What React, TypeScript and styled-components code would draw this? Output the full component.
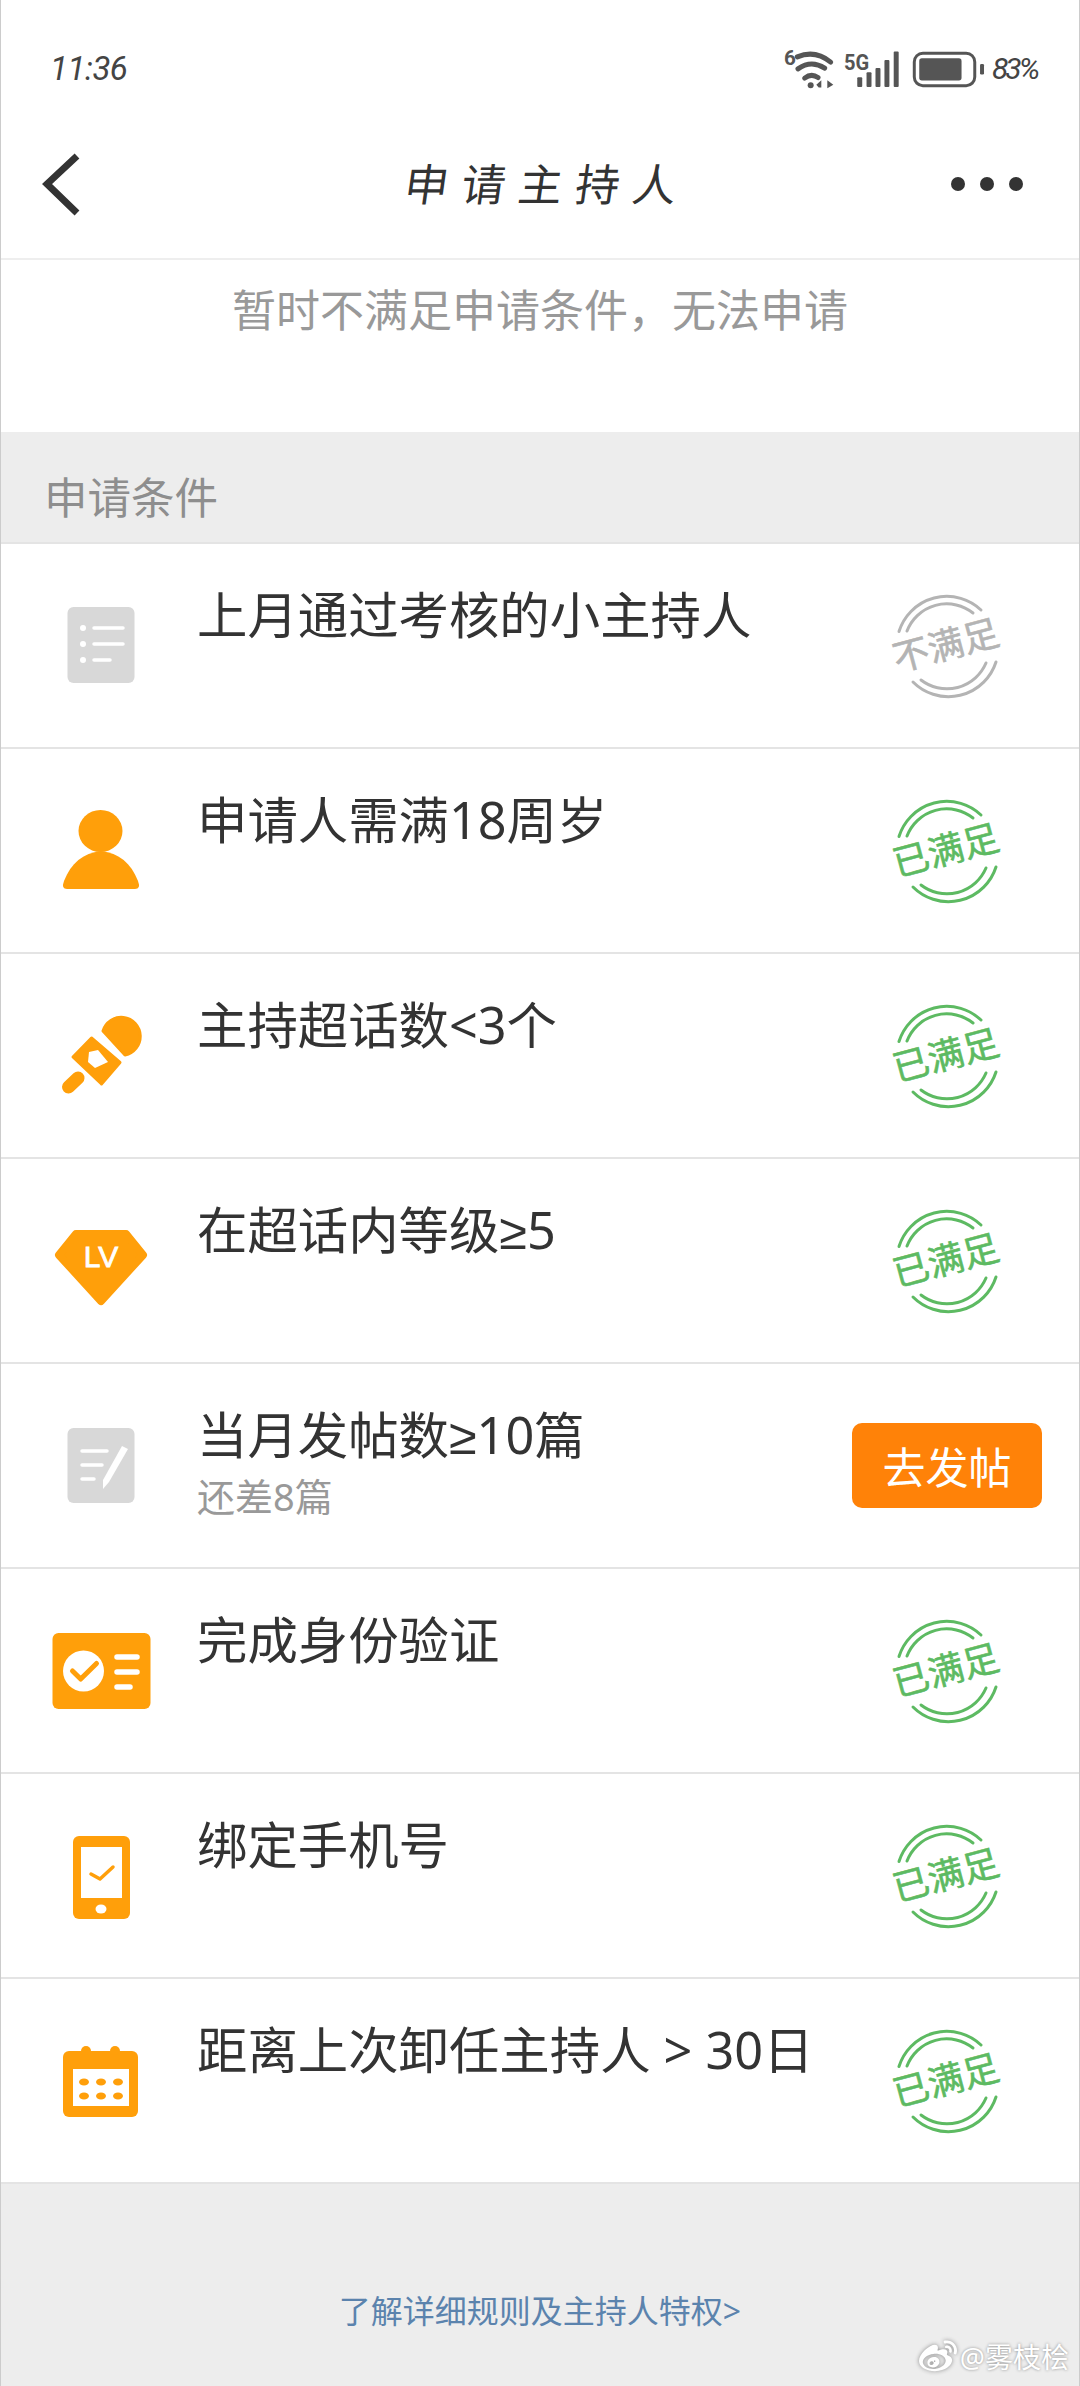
import React from 'react'
import styled, { createGlobalStyle } from 'styled-components'
import { FaWeibo } from 'react-icons/fa'

const ORANGE = '#ff9f0a'
const GREY = '#d8d8d8'

const ListIcon = () => (
  <IconSvg viewBox="0 0 120 100">
    <rect x="26.5" y="11" width="67" height="76" rx="6" fill={GREY} />
    <g fill="#fff">
      <circle cx="42" cy="32" r="3" />
      <circle cx="42" cy="48" r="3" />
      <circle cx="42" cy="64" r="3" />
    </g>
    <g stroke="#fff" strokeWidth="3.5" strokeLinecap="round">
      <path d="M53 32H82" />
      <path d="M53 48H82" />
      <path d="M53 64H69" />
    </g>
  </IconSvg>
)

const PersonIcon = () => (
  <IconSvg viewBox="0 0 120 100">
    <g fill={ORANGE}>
      <ellipse cx="59.5" cy="30" rx="22" ry="21" />
      <path d="M26 88Q20 88 23 80C30 62 42 52 60 50C78 52 90 62 97 80Q100 88 94 88Z" />
    </g>
  </IconSvg>
)

const MicIcon = () => (
  <IconSvg viewBox="0 0 120 100">
    <g fill={ORANGE} stroke={ORANGE} strokeWidth="3" strokeLinejoin="round">
      <path d="M62 25A19 19 0 1 1 84 49Z" />
      <path d="M50.5 32L79 56.5L60.5 78L32 51Z" />
    </g>
    <path d="M48 46L57 44L67 56L54 62L47 56Z" fill="#fff" />
    <path d="M27.5 81L37 72" stroke={ORANGE} strokeWidth="13" strokeLinecap="round" />
  </IconSvg>
)

const LevelIcon = () => (
  <IconSvg viewBox="0 0 120 100">
    <path
      d="M35 23H85L102 44L60 90L18 44Z"
      fill={ORANGE}
      stroke={ORANGE}
      strokeWidth="8"
      strokeLinejoin="round"
    />
    <LevelText x="60" y="56" textAnchor="middle">
      LV
    </LevelText>
  </IconSvg>
)

const EditIcon = () => (
  <IconSvg viewBox="0 0 120 100">
    <rect x="26.5" y="12" width="67" height="75" rx="6" fill={GREY} />
    <g stroke="#fff" strokeWidth="3.5" strokeLinecap="round">
      <path d="M41 35H66" />
      <path d="M41 49H61" />
      <path d="M41 63H53" />
    </g>
    <path d="M81 30L87 33L68 66L62 73L62 64Z" fill="#fff" />
  </IconSvg>
)

const CardIcon = () => (
  <IconSvg viewBox="0 0 120 100">
    <rect x="11.5" y="12" width="98" height="76" rx="6" fill={ORANGE} />
    <circle cx="42.5" cy="50" r="20.5" fill="#fff" />
    <path d="M31.5 50L39.7 58L55.5 42.5" fill="none" stroke={ORANGE} strokeWidth="5" strokeLinecap="round" strokeLinejoin="round" />
    <g stroke="#fff" strokeWidth="5.5" strokeLinecap="round">
      <path d="M76 36H96" />
      <path d="M76 51H96" />
      <path d="M76 66H89" />
    </g>
  </IconSvg>
)

const PhoneIcon = () => (
  <IconSvg viewBox="0 0 120 100">
    <rect x="32" y="10" width="57" height="83" rx="6" fill={ORANGE} />
    <rect x="40" y="21" width="41" height="51" fill="#fff" />
    <path d="M50 48L59 53L72 41" fill="none" stroke={ORANGE} strokeWidth="3.5" strokeLinecap="round" strokeLinejoin="round" />
    <ellipse cx="60" cy="83" rx="5.5" ry="4.5" fill="#fff" />
  </IconSvg>
)

const CalendarIcon = () => (
  <IconSvg viewBox="0 0 120 100">
    <g fill={ORANGE}>
      <circle cx="45" cy="20" r="5" />
      <circle cx="74" cy="20" r="5" />
      <rect x="22" y="20" width="75" height="66" rx="6" />
    </g>
    <rect x="32" y="38" width="56" height="37" fill="#fff" />
    <g fill={ORANGE}>
      {[43, 60, 77].map((x) =>
        [51, 65].map((y) => <ellipse key={`${x}-${y}`} cx={x} cy={y} rx="5" ry="3.5" />),
      )}
    </g>
  </IconSvg>
)

const WifiIcon = () => (
  <StatusSvg viewBox="65 35 165 155" width="55" height="52">
    <text x="68" y="100" fontFamily="Roboto, sans-serif" fontSize="62" fontWeight="700" fill="#555">
      6
    </text>
    <g fill="none" stroke="#555" strokeWidth="15" strokeLinecap="round">
      <path d="M108 76Q162 54 208 92" />
      <path d="M110 112Q150 84 190 110" />
      <path d="M130 140Q150 124 170 138" />
    </g>
    <circle cx="148" cy="161" r="9" fill="#555" />
    <path d="M165 160L180 146V168H172Z" fill="#555" />
    <path d="M198 146L216 160L198 170Z" fill="#555" />
  </StatusSvg>
)

const SignalIcon = () => (
  <StatusSvg viewBox="250 55 175 120" width="58" height="40">
    <text x="250" y="118" fontFamily="Roboto, sans-serif" fontSize="68" fontWeight="700" fill="#555" textLength="76" lengthAdjust="spacingAndGlyphs">
      5G
    </text>
    <g fill="#555">
      <rect x="290" y="140" width="15" height="29" rx="3" />
      <rect x="318" y="125" width="15" height="44" rx="3" />
      <rect x="345" y="112" width="15" height="57" rx="3" />
      <rect x="372" y="88" width="15" height="81" rx="3" />
      <rect x="400" y="62" width="15" height="107" rx="3" />
    </g>
  </StatusSvg>
)

const BatteryIcon = () => (
  <StatusSvg viewBox="449 58 234 115" width="78" height="38">
    <rect x="467" y="68" width="183" height="98" rx="26" fill="none" stroke="#555" strokeWidth="9" />
    <rect x="482" y="83" width="128" height="67" rx="8" fill="#555" />
    <rect x="666" y="100" width="12" height="32" rx="4" fill="#555" />
  </StatusSvg>
)

const Stamp: React.FC<{ label: string; $color: string }> = ({ label, $color }) => (
  <StampSvg viewBox="0 0 110 110">
    <g fill="none" stroke={$color} strokeWidth="3" strokeLinecap="round">
      <path d="M7 40.5A50 50 0 0 1 89 19" />
      <path d="M15 40A42.5 42.5 0 0 1 81 22" />
      <path d="M21 91A50 50 0 0 0 104 71" />
      <path d="M29 89A42.5 42.5 0 0 0 94 72" />
    </g>
    <StampText x="54" y="67" textAnchor="middle" transform="rotate(-15 55 55)" fill={$color} stroke={$color}>
      {label}
    </StampText>
  </StampSvg>
)

type Condition = {
  title: string
  Icon: React.FC
  hint?: string
  status: 'met' | 'unmet' | 'action'
}

const conditions: Condition[] = [
  { title: '上月通过考核的小主持人', Icon: ListIcon, status: 'unmet' },
  { title: '申请人需满18周岁', Icon: PersonIcon, status: 'met' },
  { title: '主持超话数<3个', Icon: MicIcon, status: 'met' },
  { title: '在超话内等级≥5', Icon: LevelIcon, status: 'met' },
  { title: '当月发帖数≥10篇', Icon: EditIcon, hint: '还差8篇', status: 'action' },
  { title: '完成身份验证', Icon: CardIcon, status: 'met' },
  { title: '绑定手机号', Icon: PhoneIcon, status: 'met' },
  { title: '距离上次卸任主持人 > 30日', Icon: CalendarIcon, status: 'met' },
]

const App: React.FC = () => (
  <Page>
    <GlobalStyle />
    <StatusBar>
      <Clock>11:36</Clock>
      <StatusIcons>
        <WifiIcon />
        <SignalIcon />
        <BatteryIcon />
        <BatteryLevel>83%</BatteryLevel>
      </StatusIcons>
    </StatusBar>
    <NavBar>
      <BackIcon viewBox="0 0 40 64">
        <path d="M35 4L5 32L35 61" fill="none" stroke="#333" strokeWidth="7" />
      </BackIcon>
      <Title>申请主持人</Title>
      <MoreDots>
        <Dot />
        <Dot />
        <Dot />
      </MoreDots>
    </NavBar>
    <Notice>暂时不满足申请条件，无法申请</Notice>
    <SectionTitle>申请条件</SectionTitle>
    <List>
      {conditions.map(({ title, hint, Icon, status }) => (
        <Row key={title}>
          <Icon />
          <RowText>
            <RowTitle>{title}</RowTitle>
            {hint && <RowHint>{hint}</RowHint>}
          </RowText>
          <RowStatus>
            {status === 'met' && <Stamp label="已满足" $color="#5dba62" />}
            {status === 'unmet' && <Stamp label="不满足" $color="#b4b4b4" />}
            {status === 'action' && <ActionButton>去发帖</ActionButton>}
          </RowStatus>
        </Row>
      ))}
    </List>
    <Footer>
      <RulesLink>了解详细规则及主持人特权&gt;</RulesLink>
      <Watermark>
        <FaWeibo size={38} />
        @雾枝桧
      </Watermark>
    </Footer>
  </Page>
)

export default App

const GlobalStyle = createGlobalStyle`
  html,
  body {
    margin: 0;
    background: #fff;
  }

  * {
    box-sizing: border-box;
  }
`

const Page = styled.div`
  width: 1080px;
  height: 2386px;
  display: flex;
  flex-direction: column;
  overflow: hidden;
  background: #fff;
  border-left: 1px solid #ccc;
  border-right: 1px solid #ccc;
  font-family: 'Noto Sans', 'Liberation Sans', 'Noto Sans CJK SC', sans-serif;
`

const StatusBar = styled.div`
  height: 110px;
  padding: 48px 42px 0 49px;
  display: flex;
  justify-content: space-between;
  align-items: flex-start;
`

const Clock = styled.span`
  font-family: Roboto, sans-serif;
  font-size: 33px;
  font-style: italic;
  line-height: 42px;
  letter-spacing: -0.5px;
  color: #444;
`

const StatusIcons = styled.div`
  height: 42px;
  display: flex;
  align-items: center;
  gap: 6px;
`

const StatusSvg = styled.svg`
  display: block;
`

const BatteryLevel = styled.span`
  font-family: Roboto, sans-serif;
  font-size: 30px;
  font-style: italic;
  line-height: 42px;
  letter-spacing: -3px;
  color: #444;
`

const NavBar = styled.div`
  height: 150px;
  padding: 0 41px;
  display: grid;
  grid-template-columns: 1fr auto 1fr;
  align-items: center;
  border-bottom: 2px solid #eee;
`

const BackIcon = styled.svg`
  width: 40px;
  height: 64px;
  display: block;
`

const Title = styled.h1`
  margin: 0;
  padding-left: 15px;
  font-size: 44px;
  font-weight: 400;
  line-height: 60px;
  letter-spacing: 13px;
  color: #333;
  transform: skewX(-8deg);
`

const MoreDots = styled.div`
  justify-self: end;
  margin-right: 15px;
  display: flex;
  gap: 15px;
`

const Dot = styled.span`
  width: 14px;
  height: 14px;
  border-radius: 50%;
  background: #333;
`

const Notice = styled.p`
  height: 172px;
  margin: 0;
  padding-top: 22px;
  text-align: center;
  font-size: 44px;
  line-height: 56px;
  color: #999;
`

const SectionTitle = styled.h2`
  height: 110px;
  margin: 0;
  padding: 40px 0 0 43px;
  background: #ededed;
  font-size: 43.5px;
  font-weight: 400;
  line-height: 50px;
  color: #8e8e8e;
`

const List = styled.div`
  display: flex;
  flex-direction: column;
`

const Row = styled.div`
  height: 205px;
  padding: 0 37px 0 40px;
  display: grid;
  grid-template-columns: 120px 1fr 190px;
  column-gap: 36px;
  align-items: center;
  border-top: 2px solid #e4e4e4;
`

const IconSvg = styled.svg`
  width: 120px;
  height: 100px;
  display: block;
`

const LevelText = styled.text`
  font-family: 'Liberation Sans', sans-serif;
  font-size: 30px;
  fill: #fff;
  stroke: #fff;
  stroke-width: 0.8px;
`

const RowText = styled.div`
  align-self: start;
  padding-top: 41px;
`

const RowTitle = styled.div`
  font-size: 50.4px;
  line-height: 60px;
  white-space: nowrap;
  color: #333;
`

const RowHint = styled.div`
  margin-top: 9px;
  font-size: 38px;
  line-height: 44px;
  color: #999;
`

const RowStatus = styled.div`
  display: flex;
  justify-content: center;
`

const StampSvg = styled.svg`
  width: 110px;
  height: 110px;
  display: block;
  overflow: visible;
`

const StampText = styled.text`
  font-size: 36px;
  font-family: 'Noto Sans CJK SC', sans-serif;
  stroke-width: 0.6px;
`

const ActionButton = styled.button`
  width: 190px;
  height: 85px;
  padding: 0;
  border: 0;
  border-radius: 10px;
  background: #ff8208;
  color: #fff;
  font-family: inherit;
  font-size: 43px;
`

const Footer = styled.div`
  position: relative;
  flex: 1;
  padding-top: 105px;
  border-top: 2px solid #e4e4e4;
  background: #ededed;
  text-align: center;
`

const RulesLink = styled.a`
  display: block;
  font-size: 32px;
  line-height: 44px;
  color: #5b83ad;
`

const Watermark = styled.div`
  position: absolute;
  right: 10px;
  bottom: 10px;
  display: flex;
  align-items: center;
  gap: 3px;
  font-size: 28px;
  line-height: 36px;
  color: #fff;
  text-shadow: 0 0 3px #888;

  svg {
    filter: drop-shadow(0 0 2px #888);
  }
`
